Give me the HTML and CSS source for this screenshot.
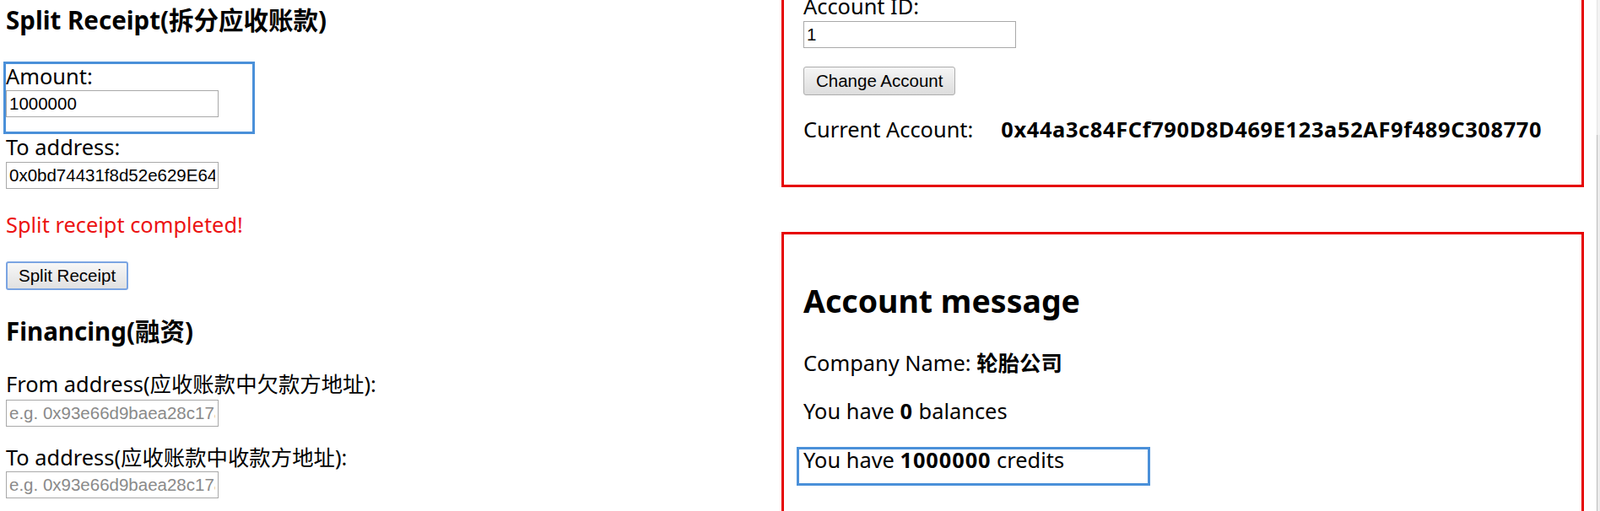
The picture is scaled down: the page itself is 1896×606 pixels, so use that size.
FILE: index.html
```html
<!DOCTYPE html>
<html lang="zh-CN">
<head>
<meta charset="utf-8">
<title>Supply Chain Finance</title>
<link rel="stylesheet" href="styles.css">
</head>
<body>
<div class="page">
  <section class="left">
    <h3 class="title">Split Receipt(拆分应收账款)</h3>
    <div class="field field-first field-marked">
      <label class="field-label">Amount:</label>
      <input class="text-input input-tight" type="text" value="1000000">
      <span class="mark mark-amount"></span>
    </div>
    <div class="field field-second">
      <label class="field-label">To address:</label>
      <input class="text-input" type="text" value="0x0bd74431f8d52e629E647a1C3b5D9e2F8a4B6c0d">
    </div>
    <p class="status">Split receipt completed!</p>
    <button class="btn btn-focus btn-split" type="button">Split Receipt</button>
    <h3 class="title title-financing">Financing(融资)</h3>
    <div class="field field-from">
      <label class="field-label">From address(应收账款中欠款方地址):</label>
      <input class="text-input input-loose" type="text" placeholder="e.g. 0x93e66d9baea28c17a8a5c1e2a4d9f2e8b1c3d5e7">
    </div>
    <div class="field field-to">
      <label class="field-label">To address(应收账款中收款方地址):</label>
      <input class="text-input input-tight" type="text" placeholder="e.g. 0x93e66d9baea28c17a8a5c1e2a4d9f2e8b1c3d5e7">
    </div>
  </section>

  <section class="right">
    <div class="box account-box">
      <label class="field-label">Account ID:</label>
      <input class="text-input" type="text" value="1">
      <button class="btn btn-change" type="button">Change Account</button>
      <div class="current-row">
        <span class="current-label">Current Account:</span>
        <strong class="address">0x44a3c84FCf790D8D469E123a52AF9f489C308770</strong>
      </div>
    </div>

    <div class="box message-box">
      <h2 class="message-title">Account message</h2>
      <p class="info info-company">Company Name: <strong>轮胎公司</strong></p>
      <p class="info info-balance">You have <strong class="num">0</strong> balances</p>
      <p class="info info-credits">You have <strong class="num">1000000</strong> credits<span class="mark mark-credits"></span></p>
    </div>
  </section>
</div>
<div class="scrollbar"><div class="scrollbar-thumb"></div></div>
</body>
</html>
```
FILE: styles.css
```css
html {
  overflow: hidden;
}

body {
  margin: 0;
  background: #fff;
  color: #000;
  font-family: "Noto Sans", "Noto Sans CJK SC", sans-serif;
  font-size: 25.4px;
  line-height: 32px;
}

.page {
  display: flex;
  align-items: flex-start;
}

.left {
  flex: 0 0 919px;
  padding-left: 7px;
}

.right {
  flex: 0 0 951px;
}

/* headings */
.title {
  margin: 0;
  padding-top: 4px;
  font-size: 29.5px;
  line-height: 40px;
  font-weight: 700;
}

.title-financing {
  margin-top: 29px;
  padding-top: 0;
}

/* form fields */
.field {
  display: flex;
  flex-direction: column;
  align-items: flex-start;
}

.field-marked {
  position: relative;
}

.field-first { margin-top: 30px; }
.field-second { margin-top: 19px; }
.field-from { margin-top: 26px; }
.field-to { margin-top: 20px; }

.field-label {
  display: block;
  line-height: 32px;
}

.text-input {
  display: block;
  box-sizing: border-box;
  width: 252px;
  height: 32px;
  margin: 2px 0 0;
  padding: 0 3px;
  border: 1px solid #a9a9a9;
  border-radius: 0;
  background: #fff;
  color: #000;
  font-family: "Liberation Sans", Arial, sans-serif;
  font-size: 20.5px;
  outline: none;
}

.input-tight { margin-top: 1px; }
.input-loose { margin-top: 3px; }

.text-input::placeholder {
  color: #8a8a8a;
  opacity: 1;
}

.status {
  margin: 26px 0 0;
  color: #ec1313;
  line-height: 32px;
}

/* buttons */
.btn {
  display: block;
  box-sizing: border-box;
  height: 34px;
  padding: 0 14px;
  border: 1px solid #adadad;
  border-radius: 3px;
  background: linear-gradient(#f5f5f5, #dddddd);
  color: #000;
  font-family: "Liberation Sans", Arial, sans-serif;
  font-size: 20.5px;
  line-height: 1;
}

.btn-focus {
  padding: 0 13px;
  border: 2px solid #7aa4e2;
  background: linear-gradient(#f7f7f7, #e1e1e1);
}

.btn-split { margin-top: 28px; }
.btn-change { margin-top: 22px; }

/* boxes on the right */
.box {
  box-sizing: border-box;
  width: 951px;
  border: 3px solid #e60000;
  padding-left: 23px;
}

.account-box {
  margin-top: -60px;
  padding-top: 48px;
  padding-bottom: 50px;
}

.current-row {
  display: flex;
  margin-top: 24px;
  line-height: 32px;
}

.address {
  margin-left: 33px;
  font-weight: 700;
  letter-spacing: 0.64px;
}

.message-box {
  margin-top: 53px;
  padding-top: 54px;
  padding-bottom: 60px;
}

.message-title {
  margin: 0;
  font-size: 37.5px;
  line-height: 50px;
  font-weight: 700;
}

.info {
  margin: 0;
  line-height: 32px;
}

.info strong { font-weight: 700; }

.info .num { letter-spacing: 0.9px; }

.info-company { margin-top: 32px; }
.info-balance { margin-top: 25px; }
.info-credits {
  position: relative;
  margin-top: 26px;
}

/* blue annotation rectangles */
.mark {
  position: absolute;
  box-sizing: border-box;
  border: 3px solid #4a90d9;
  pointer-events: none;
}

.mark-amount {
  left: -3px;
  top: -1px;
  width: 298px;
  height: 86px;
}

.mark-credits {
  left: -8px;
  top: 1px;
  width: 419px;
  height: 46px;
}

/* window scrollbar edge */
.scrollbar {
  position: fixed;
  top: 0;
  right: 0;
  bottom: 0;
  width: 4px;
  box-sizing: border-box;
  border-left: 1px solid #e4e4e4;
  background: #f3f3f3;
}

.scrollbar-thumb {
  margin-top: 160px;
  height: 446px;
  margin-left: -1px;
  border-left: 1px solid #bdbdbd;
  background: #ececec;
}
```
